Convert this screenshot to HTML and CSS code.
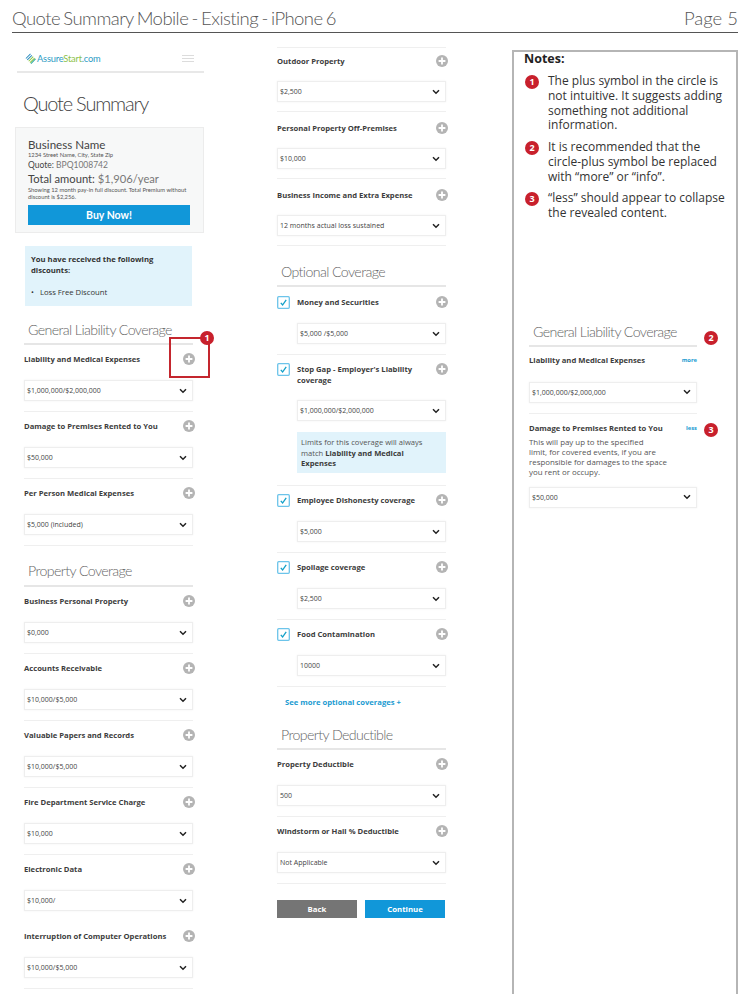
FILE: index.html
```html
<!DOCTYPE html>
<html lang="en">
<head>
<meta charset="utf-8">
<title>Quote Summary Mobile - Existing - iPhone 6</title>
<link rel="stylesheet" href="styles.css">
</head>
<body>
<svg class="sprite" aria-hidden="true">
  <symbol id="plus" viewBox="0 0 12 12"><circle cx="6" cy="6" r="6" fill="#b4b4b4"/><path d="M6 2.6v6.8M2.6 6h6.8" stroke="#fff" stroke-width="1.8"/></symbol>
  <symbol id="chev" viewBox="0 0 8 6"><path d="M1 1.2 4 4.2 7 1.2" fill="none" stroke="#222" stroke-width="1.5"/></symbol>
  <symbol id="tick" viewBox="0 0 13 13"><rect x=".7" y=".7" width="11.6" height="11.6" rx="1" fill="#fff" stroke="#6cc4ea" stroke-width="1.3"/><path d="M3.8 6.8 5.6 9 9.2 3.8" fill="none" stroke="#12a0c8" stroke-width="1.3"/></symbol>
</svg>
<header class="top">
  <span class="top-title">Quote Summary Mobile - Existing - iPhone 6</span>
  <span>Page 5</span>
</header>
<main class="main">
  <section class="col col-one">
    <div class="brand">
      <svg class="brand-mark" viewBox="0 0 12 12" aria-hidden="true">
        <path d="M1 6 6 1M2.500 7.500 7.500 2.500" stroke="#2f8fc0" stroke-width="1.100"/>
        <path d="M4 9 9 4M5.500 10.500 10.500 5.500" stroke="#8cc63f" stroke-width="1.100"/>
        <path d="M6.500 11.500 11.500 6.500" stroke="#2aa7a0" stroke-width="1.100"/>
      </svg>
      <span class="brand-name"><span class="b-blue">Assure</span><span class="b-green">Start</span><span class="b-blue">.com</span></span>
      <span class="burger"><i></i><i></i><i></i></span>
    </div>
    <h1 class="page-title">Quote Summary</h1>
    <div class="summary">
      <div class="biz">Business Name</div>
      <div class="fine">1234 Street Name, City, State Zip</div>
      <div class="quote">Quote: <span class="light">BPQ1008742</span></div>
      <div class="total">Total amount: <span class="light">$1,906/year</span></div>
      <div class="fine fine-sans">Showing 12 month pay-in full discount. Total Premium without discount is $2,256.</div>
      <div class="buy">Buy Now!</div>
    </div>
    <div class="discount">
      <p class="discount-title">You have received the following discounts:</p>
      <p class="discount-item">•&nbsp;&nbsp;&nbsp;Loss Free Discount</p>
    </div>
    <div class="stack">
      <h2 class="sec-title sec-first">General Liability Coverage</h2>
      <div class="row marked">
        <div class="label"><span>Liability and Medical Expenses</span><svg class="plus"><use href="#plus"/></svg></div>
        <div class="select"><span>$1,000,000/$2,000,000</span><svg class="chev"><use href="#chev"/></svg></div>
        <div class="callout"><span class="badge badge-corner">1</span></div>
      </div>
      <div class="row">
        <div class="label"><span>Damage to Premises Rented to You</span><svg class="plus"><use href="#plus"/></svg></div>
        <div class="select"><span>$50,000</span><svg class="chev"><use href="#chev"/></svg></div>
      </div>
      <div class="row">
        <div class="label"><span>Per Person Medical Expenses</span><svg class="plus"><use href="#plus"/></svg></div>
        <div class="select"><span>$5,000 (included)</span><svg class="chev"><use href="#chev"/></svg></div>
      </div>
      <h2 class="sec-title sec-next">Property Coverage</h2>
      <div class="row">
        <div class="label"><span>Business Personal Property</span><svg class="plus"><use href="#plus"/></svg></div>
        <div class="select"><span>$0,000</span><svg class="chev"><use href="#chev"/></svg></div>
      </div>
      <div class="row">
        <div class="label"><span>Accounts Receivable</span><svg class="plus"><use href="#plus"/></svg></div>
        <div class="select"><span>$10,000/$5,000</span><svg class="chev"><use href="#chev"/></svg></div>
      </div>
      <div class="row">
        <div class="label"><span>Valuable Papers and Records</span><svg class="plus"><use href="#plus"/></svg></div>
        <div class="select"><span>$10,000/$5,000</span><svg class="chev"><use href="#chev"/></svg></div>
      </div>
      <div class="row">
        <div class="label"><span>Fire Department Service Charge</span><svg class="plus"><use href="#plus"/></svg></div>
        <div class="select"><span>$10,000</span><svg class="chev"><use href="#chev"/></svg></div>
      </div>
      <div class="row row-plain">
        <div class="label"><span>Electronic Data</span><svg class="plus"><use href="#plus"/></svg></div>
        <div class="select"><span>$10,000/</span><svg class="chev"><use href="#chev"/></svg></div>
      </div>
      <div class="row">
        <div class="label"><span>Interruption of Computer Operations</span><svg class="plus"><use href="#plus"/></svg></div>
        <div class="select"><span>$10,000/$5,000</span><svg class="chev"><use href="#chev"/></svg></div>
      </div>
    </div>
  </section>

  <section class="col col-two">
    <div class="row row-tight row-top">
      <div class="label"><span>Outdoor Property</span><svg class="plus"><use href="#plus"/></svg></div>
      <div class="select"><span>$2,500</span><svg class="chev"><use href="#chev"/></svg></div>
    </div>
    <div class="row row-tight">
      <div class="label"><span>Personal Property Off-Premises</span><svg class="plus"><use href="#plus"/></svg></div>
      <div class="select"><span>$10,000</span><svg class="chev"><use href="#chev"/></svg></div>
    </div>
    <div class="row row-tight">
      <div class="label"><span>Business Income and Extra Expense</span><svg class="plus"><use href="#plus"/></svg></div>
      <div class="select"><span>12 months actual loss sustained</span><svg class="chev"><use href="#chev"/></svg></div>
    </div>
    <h2 class="sec-title sec-optional">Optional Coverage</h2>
    <div class="row opt">
      <div class="label"><svg class="tick"><use href="#tick"/></svg><span>Money and Securities</span><svg class="plus"><use href="#plus"/></svg></div>
      <div class="select"><span>$5,000 /$5,000</span><svg class="chev"><use href="#chev"/></svg></div>
    </div>
    <div class="row opt row-info">
      <div class="label label-wrap"><svg class="tick"><use href="#tick"/></svg><span>Stop Gap - Employer's Liability coverage</span><svg class="plus"><use href="#plus"/></svg></div>
      <div class="select"><span>$1,000,000/$2,000,000</span><svg class="chev"><use href="#chev"/></svg></div>
      <div class="info">Limits for this coverage will always match <b>Liability and Medical Expenses</b></div>
    </div>
    <div class="row opt">
      <div class="label"><svg class="tick"><use href="#tick"/></svg><span>Employee Dishonesty coverage</span><svg class="plus"><use href="#plus"/></svg></div>
      <div class="select"><span>$5,000</span><svg class="chev"><use href="#chev"/></svg></div>
    </div>
    <div class="row opt">
      <div class="label"><svg class="tick"><use href="#tick"/></svg><span>Spoilage coverage</span><svg class="plus"><use href="#plus"/></svg></div>
      <div class="select"><span>$2,500</span><svg class="chev"><use href="#chev"/></svg></div>
    </div>
    <div class="row opt">
      <div class="label"><svg class="tick"><use href="#tick"/></svg><span>Food Contamination</span><svg class="plus"><use href="#plus"/></svg></div>
      <div class="select"><span>10000</span><svg class="chev"><use href="#chev"/></svg></div>
    </div>
    <div class="see-more">See more optional coverages +</div>
    <h2 class="sec-title sec-deduct">Property Deductible</h2>
    <div class="row">
      <div class="label"><span>Property Deductible</span><svg class="plus"><use href="#plus"/></svg></div>
      <div class="select"><span>500</span><svg class="chev"><use href="#chev"/></svg></div>
    </div>
    <div class="row">
      <div class="label"><span>Windstorm or Hail % Deductible</span><svg class="plus"><use href="#plus"/></svg></div>
      <div class="select"><span>Not Applicable</span><svg class="chev"><use href="#chev"/></svg></div>
    </div>
    <div class="actions">
      <div class="btn btn-back">Back</div>
      <div class="btn btn-go">Continue</div>
    </div>
  </section>

  <aside class="notes">
    <div class="notes-title">Notes:</div>
    <div class="note"><span class="badge">1</span><p>The plus symbol in the circle is not intuitive. It suggests adding something not additional information.</p></div>
    <div class="note"><span class="badge">2</span><p>It is recommended that the circle-plus symbol be replaced with “more” or “info”.</p></div>
    <div class="note"><span class="badge">3</span><p>“less” should appear to collapse the revealed content.</p></div>
    <div class="mini">
      <h2 class="sec-title">General Liability Coverage</h2>
      <span class="badge badge-two">2</span>
      <div class="row">
        <div class="label"><span>Liability and Medical Expenses</span><span class="toggle">more</span></div>
        <div class="select"><span>$1,000,000/$2,000,000</span><svg class="chev"><use href="#chev"/></svg></div>
      </div>
      <div class="row row-plain row-open">
        <div class="label"><span>Damage to Premises Rented to You</span><span class="toggle">less</span></div>
        <p class="desc">This will pay up to the specified<br>limit, for covered events, if you are responsible for damages to the space you rent or occupy.</p>
        <div class="select"><span>$50,000</span><svg class="chev"><use href="#chev"/></svg></div>
        <span class="badge badge-three">3</span>
      </div>
    </div>
  </aside>
</main>
</body>
</html>
```
FILE: styles.css
```css
* { box-sizing: border-box; }
html, body { margin: 0; padding: 0; }
body {
  width: 750px;
  height: 994px;
  overflow: hidden;
  background: #fff;
  display: flex;
  flex-direction: column;
  font-family: "Open Sans", sans-serif;
  color: #3a3a3a;
}
.sprite { display: none; }

.top {
  flex: none;
  height: 33px;
  margin: 0 12px;
  display: flex;
  justify-content: space-between;
  align-items: flex-end;
  padding-bottom: 2px;
  border-bottom: 1px solid #555;
  font-family: Lato, sans-serif;
  font-weight: 300;
  font-size: 18.500px;
  line-height: 24px;
  color: #555;
}
.top-title { letter-spacing: -.55px; word-spacing: -1.200px; }

.main {
  flex: 1;
  min-height: 0;
  display: flex;
  align-items: stretch;
  padding-left: 15px;
}
.col { flex: none; }
.col-one { width: 189px; }
.col-two { width: 169px; margin-left: 73px; padding-top: 14px; }

.brand {
  margin: 12px 0 0 2px;
  height: 28px;
  padding: 0 10px 0 8px;
  display: flex;
  align-items: center;
  border-bottom: 2px solid #e8e8e8;
}
.brand-mark { width: 11px; height: 11px; flex: none; }
.brand-name {
  margin-left: 1px;
  font-family: Lato, sans-serif;
  font-size: 9.300px;
  letter-spacing: -.2px;
}
.b-blue { color: #2d9cc4; }
.b-green { color: #8dc24a; }
.burger { margin-left: auto; width: 12px; display: flex; flex-direction: column; gap: 2px; }
.burger i { display: block; height: 1px; background: #dcdcdc; }

.page-title {
  margin: 17px 0 0 8px;
  height: 27px;
  font-family: Lato, sans-serif;
  font-weight: 300;
  font-size: 20px;
  line-height: 27px;
  letter-spacing: -1.200px;
  color: #444;
}
.summary {
  margin-top: 10px;
  height: 106px;
  padding: 10px 13px 0 12px;
  background: #f7f8f8;
  border: 1px solid #ececec;
  font-family: Lato, sans-serif;
}
.biz { font-size: 11.600px; line-height: 13px; color: #444; }
.fine { font-size: 5.800px; line-height: 7px; color: #555; }
.fine-sans { width: 160px; }
.quote { font-size: 8.500px; line-height: 11px; margin-top: 2px; color: #444; }
.total { font-size: 11.200px; line-height: 15px; color: #444; }
.light { color: #777; }
.buy {
  margin-top: 5px;
  height: 20px;
  background: #1197d9;
  color: #fff;
  font-weight: 700;
  font-size: 10.500px;
  line-height: 20px;
  text-align: center;
}
.discount {
  margin: 13px 12px 0 10px;
  height: 60px;
  padding: 8px 6px 0;
  background: #e1f3fb;
  font-size: 7.700px;
  line-height: 11px;
  color: #333;
}
.discount p { margin: 0; }
.discount-title { font-weight: 700; }
.discount .discount-item { margin-top: 11px; }

.stack { margin: 0 11px 0 9px; }
.sec-title {
  margin: 0;
  height: 25px;
  padding: 0 0 3px 4px;
  border-bottom: 2px solid #e6e6e6;
  font-family: Lato, sans-serif;
  font-weight: 300;
  font-size: 14.200px;
  line-height: 20px;
  letter-spacing: -.6px;
  color: #666;
}
.sec-first { margin-top: 14px; }
.sec-next { margin-top: 15px; height: 26px; padding-bottom: 4px; }
.sec-optional { margin-top: 16px; }
.sec-optional + .row { padding-top: 7px; }
.sec-deduct { margin-top: 8px; }

.row {
  position: relative;
  padding: 6px 0 10px;
  border-bottom: 1px solid #efefef;
}
.row-plain { border-bottom-color: transparent; }
.row-top { border-top: 1px solid #efefef; }
.label {
  display: flex;
  align-items: center;
  min-height: 16px;
  margin: 0 -2px 13px 0;
  font-weight: 700;
  font-size: 7.650px;
  line-height: 11px;
  color: #3c3c3c;
}
.label > span:first-child { flex: 1; }
.row-tight { padding: 8px 0 9px; }
.row-tight .label { margin-bottom: 12px; }
.row-top { padding-top: 5px; }
.plus { width: 12px; height: 12px; flex: none; }
.select {
  height: 21px;
  padding: 0 5px 0 2px;
  display: flex;
  align-items: center;
  justify-content: space-between;
  background: #fff;
  border: 1px solid #eee;
  box-shadow: 0 0 2px rgba(0, 0, 0, .06);
  font-size: 7px;
  color: #444;
}
.chev { width: 8px; height: 6px; flex: none; }

.opt .select { margin-left: 20px; padding-left: 2px; }
.tick { width: 13px; height: 13px; flex: none; margin-right: 7px; }
.opt .label > span { flex: 1; }
.label-wrap { align-items: flex-start; padding-top: 3px; min-height: 27px; }
.opt .label-wrap { margin-bottom: 12px; }
.label-wrap .tick, .label-wrap .plus { margin-top: -1px; }
.label-wrap > span { padding-right: 8px; }
.row-info { padding-bottom: 12px; }
.info {
  margin: 11px 0 0 20px;
  height: 41px;
  padding: 5px 20px 0 4px;
  background: #e1f3fb;
  font-size: 7.600px;
  line-height: 10.500px;
  color: #555;
}
.info b { color: #3c3c3c; }

.see-more {
  height: 30px;
  padding-left: 8px;
  font-weight: 700;
  font-size: 7.650px;
  line-height: 30px;
  color: #1b9bd1;
}
.actions { margin-top: 16px; display: flex; gap: 8px; }
.btn {
  width: 80px;
  height: 18px;
  text-align: center;
  color: #fff;
  font-weight: 700;
  font-size: 7.800px;
  line-height: 18px;
}
.btn-back { background: #757575; }
.btn-go { background: #1197d9; }

.notes {
  flex: none;
  width: 226px;
  margin: 17px 0 0 66px;
  padding: 0 6px 0 10px;
  border: 2px solid #b5b5b5;
  border-bottom: 0;
}
.notes-title { height: 14px; font-weight: 700; font-size: 12.500px; line-height: 14px; color: #222; }
.note { display: flex; gap: 9px; margin-top: 7px; font-size: 12px; line-height: 14.700px; color: #333; }
.notes-title + .note { margin-top: 8.300px; }
.note p { margin: 0; }
.note .badge { margin: 1px 0 0 1px; }

.badge {
  flex: none;
  width: 14px;
  height: 14px;
  border-radius: 50%;
  background: #c8202c;
  color: #fff;
  font-weight: 700;
  font-size: 9px;
  line-height: 14px;
  text-align: center;
  display: block;
}
.mini { position: relative; margin: 101px 33px 0 5px; }
.badge-two { position: absolute; left: 175px; top: 9px; }
.badge-three { position: absolute; left: 175px; top: 9px; }
.mini .label { margin-right: 0; }
.toggle { flex: none; font-size: 5.800px; font-weight: 700; color: #1b9bd1; }
.row-open { padding-top: 7px; }
.row-open .label { margin-bottom: 0; }
.desc {
  margin: 0 0 10px;
  width: 140px;
  font-size: 7.900px;
  line-height: 10px;
  color: #555;
}

.marked { z-index: 1; }
.callout {
  position: absolute;
  left: 145px;
  top: -8px;
  width: 41px;
  height: 41px;
  border: 2px solid #c4262e;
}
.badge-corner { position: absolute; right: -6px; top: -8px; }
```
